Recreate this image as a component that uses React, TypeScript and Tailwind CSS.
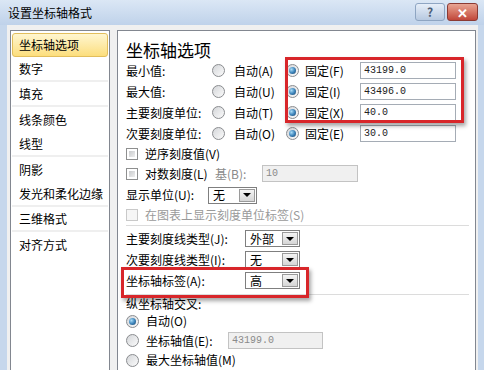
import React from 'react';

const font = { fontFamily: '"Noto Sans CJK SC", "Noto Sans", sans-serif' };

const navItems: { label: string; sep?: boolean }[] = [
    { label: '数字', sep: true },
    { label: '填充', sep: true },
    { label: '线条颜色' },
    { label: '线型', sep: true },
    { label: '阴影' },
    { label: '发光和柔化边缘', sep: true },
    { label: '三维格式', sep: true },
    { label: '对齐方式' },
];

const axisRows = [
    { label: '最小值:', auto: '自动(A)', fixed: '固定(F)', value: '43199.0' },
    { label: '最大值:', auto: '自动(U)', fixed: '固定(I)', value: '43496.0' },
    { label: '主要刻度单位:', auto: '自动(T)', fixed: '固定(X)', value: '40.0' },
    { label: '次要刻度单位:', auto: '自动(O)', fixed: '固定(E)', value: '30.0' },
];

const Radio: React.FC<{ checked?: boolean }> = ({ checked }) => (
    <div className="w-[13px] h-[13px] shrink-0 rounded-full border border-[#8a8c8f] bg-gradient-to-br from-[#d4d6d9] to-[#fbfbfb] flex items-center justify-center">
        {checked && <div className="w-[7px] h-[7px] rounded-full bg-radial-[at_35%_35%] from-[#a9dcf7] via-[#3f86bc] to-[#173f66]" />}
    </div>
);

const Checkbox: React.FC<{ disabled?: boolean }> = ({ disabled }) => (
    <div className={disabled ? 'w-[12px] h-[12px] shrink-0 border border-[#c9c9c9] bg-[#f6f6f6]' : 'w-[12px] h-[12px] shrink-0 border border-[#8e8f8f] bg-white p-[2px]'}>
        {!disabled && <div className="w-full h-full bg-gradient-to-br from-[#c9cbcd] to-[#eeeeee]" />}
    </div>
);

const TextBox: React.FC<{ value: string; width: string; disabled?: boolean }> = ({ value, width, disabled }) => (
    <div className={`${width} h-[17px] border flex items-center pl-[3px] text-[10px] ${disabled ? 'border-[#c3c3c3] bg-[#f0f0f0] text-[#8a8a8a]' : 'border-[#a5acb5] bg-white text-[#222]'}`} style={{ fontFamily: '"Liberation Mono", monospace' }}>
        {value}
    </div>
);

const Select: React.FC<{ value: string; width: string }> = ({ value, width }) => (
    <div className={`${width} h-[17px] border border-[#7f7f7f] bg-white flex items-center justify-between pl-[4px] pr-[1px]`}>
        <span className="text-[12px] leading-none text-black">{value}</span>
        <div className="w-[16px] h-[13px] border border-[#9a9a9a] bg-gradient-to-b from-[#f4f4f4] to-[#d6d6d6] flex items-center justify-center">
            <div className="w-0 h-0 border-l-[4px] border-r-[4px] border-t-[4px] border-l-transparent border-r-transparent border-t-black" />
        </div>
    </div>
);

export default function App() {
    return (
        <div className="w-[484px] h-[370px] overflow-hidden flex flex-col bg-[#c6d7ec]" style={font}>
            {/* title bar */}
            <div className="h-[25px] shrink-0 flex items-center justify-between pl-[8px] pr-[6px] bg-gradient-to-b from-[#dbe7f5] to-[#bfd2ea]">
                <span className="text-[12px] text-black">设置坐标轴格式</span>
                <div className="flex items-start gap-[2px] self-start pt-[3px]">
                    <div className="w-[30px] h-[18px] rounded-[3px] border border-[#8ea5c2] bg-gradient-to-b from-[#e6eef8] to-[#b7c9e0] flex items-center justify-center text-[12px] font-bold text-[#4b5d75]">?</div>
                    <div className="w-[31px] h-[18px] rounded-[3px] border border-[#8b3a33] bg-gradient-to-b from-[#e8a493] to-[#c0463a] flex items-center justify-center text-[13px] font-bold text-white leading-none">✕</div>
                </div>
            </div>

            {/* body */}
            <div className="flex-1 mx-[7px] mr-[6px] bg-[#f0f0f0] flex pt-[5px] pl-[3px] overflow-hidden">
                {/* left nav */}
                <div className="w-[100px] shrink-0 h-[360px] border border-[#828790] bg-white pt-[2px] px-[1px]">
                    <div className="h-[24px] rounded-[3px] border border-[#e2be5c] bg-gradient-to-b from-[#fff6cf] to-[#fcde7c] flex items-center pl-[6px] text-[12px] text-black">
                        坐标轴选项
                    </div>
                    {navItems.map((item) => (
                        <div key={item.label} className={`h-[25px] flex items-center pl-[7px] text-[12px] text-black ${item.sep ? 'border-b-2 border-[#efefef]' : ''}`}>
                            {item.label}
                        </div>
                    ))}
                </div>

                {/* right panel */}
                <div className="relative ml-[7px] w-[359px] shrink-0 h-[360px] border border-[#828790] bg-white pl-[8px] pr-[6px] text-[12px] leading-[14px] text-black">
                    <div className="mt-[7px] h-[22px] flex items-center text-[17px] leading-none">坐标轴选项</div>

                    {axisRows.map((row) => (
                        <div key={row.label} className="h-[21px] flex items-center">
                            <span className="w-[86px]">{row.label}</span>
                            <Radio />
                            <span className="ml-[9px] w-[43px]">{row.auto}</span>
                            <div className="ml-[9px]"><Radio checked /></div>
                            <span className="ml-[6px] w-[55px]">{row.fixed}</span>
                            <TextBox value={row.value} width="w-[96px]" />
                        </div>
                    ))}

                    <div className="h-[19px] flex items-center gap-[7px]">
                        <Checkbox />
                        <span>逆序刻度值(V)</span>
                    </div>
                    <div className="h-[21px] flex items-center">
                        <Checkbox />
                        <span className="ml-[7px] w-[70px]">对数刻度(L)</span>
                        <span className="w-[47px] text-[#8a8a8a]">基(B):</span>
                        <TextBox value="10" width="w-[96px]" disabled />
                    </div>
                    <div className="h-[22px] flex items-center">
                        <span className="w-[82px]">显示单位(U):</span>
                        <Select value="无" width="w-[49px]" />
                    </div>
                    <div className="h-[18px] flex items-center gap-[7px] text-[#9a9a9a]">
                        <Checkbox disabled />
                        <span>在图表上显示刻度单位标签(S)</span>
                    </div>
                    <div className="mt-[1px] border-t border-[#dcdcdc]" />

                    <div className="mt-[2px] h-[21px] flex items-center">
                        <span className="w-[119px]">主要刻度线类型(J):</span>
                        <Select value="外部" width="w-[55px]" />
                    </div>
                    <div className="h-[21px] flex items-center">
                        <span className="w-[119px]">次要刻度线类型(I):</span>
                        <Select value="无" width="w-[55px]" />
                    </div>
                    <div className="h-[21px] flex items-center">
                        <span className="w-[119px]">坐标轴标签(A):</span>
                        <Select value="高" width="w-[55px]" />
                    </div>
                    <div className="mt-[3px] border-t border-[#dcdcdc]" />

                    <div className="h-[17px] flex items-center">纵坐标轴交叉:</div>
                    <div className="h-[18px] flex items-center gap-[7px]">
                        <Radio checked />
                        <span>自动(O)</span>
                    </div>
                    <div className="h-[21px] flex items-center">
                        <Radio />
                        <span className="ml-[7px] w-[82px]">坐标轴值(E):</span>
                        <TextBox value="43199.0" width="w-[95px]" disabled />
                    </div>
                    <div className="h-[18px] flex items-center gap-[7px]">
                        <Radio />
                        <span>最大坐标轴值(M)</span>
                    </div>

                    {/* red highlight boxes */}
                    <div className="absolute left-[167px] top-[26px] w-[179px] h-[66px] border-[3px] border-[#d8262a] shadow-[2px_3px_4px_rgba(0,0,0,0.35)]" />
                    <div className="absolute left-[3px] top-[236px] w-[188px] h-[31px] border-[3px] border-[#d8262a] shadow-[2px_3px_4px_rgba(0,0,0,0.35)]" />
                </div>
            </div>
        </div>
    );
}
